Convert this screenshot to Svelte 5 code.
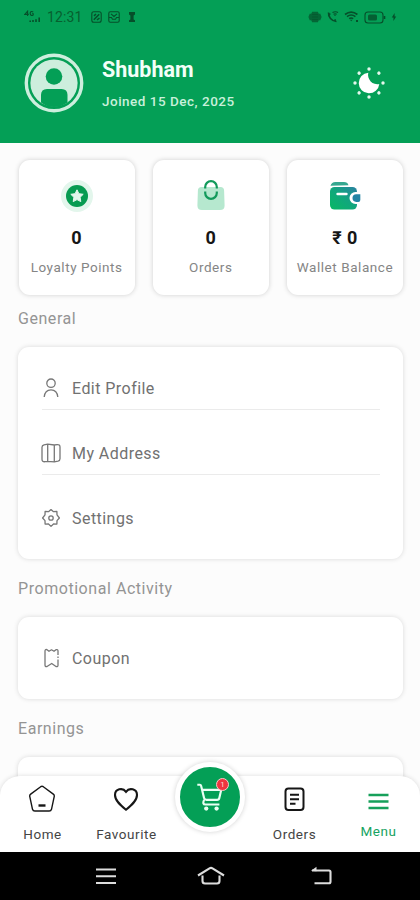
<script lang="ts">
  const stats = [
    { icon: "points", value: "0", label: "Loyalty Points" },
    { icon: "bag", value: "0", label: "Orders" },
    { icon: "wallet", value: "₹ 0", label: "Wallet Balance" },
  ];

  const sections = [
    {
      title: "General",
      items: [
        { icon: "profile", label: "Edit Profile" },
        { icon: "map", label: "My Address" },
        { icon: "settings", label: "Settings" },
      ],
    },
    { title: "Promotional Activity", items: [{ icon: "coupon", label: "Coupon" }] },
    { title: "Earnings", items: [{ icon: "", label: "" }] },
  ];

  const sunDots = [0, 45, 90, 135, 180, 225, 270, 315];
</script>

<div class="screen">
  <header>
    <div class="status">
      <svg class="signal" width="18" height="14" viewBox="0 0 18 14">
        <path d="M3.6 6V1.2L.8 4.4h4M9.2 2.1C7.4.6 6 2 6.2 3.6c.2 2 2.3 2.4 3 1.4V3.8H8" />
        <path class="thick" d="M6.2 12v-1.5M9 12v-2M12 12V9.2M15.2 12V7.6" />
      </svg>
      <span class="clock">12:31</span>
      <svg width="11" height="12" viewBox="0 0 11 12">
        <rect x=".8" y=".8" width="9.4" height="10.4" rx="2" />
        <path class="thick" d="M2.8 8.800l5.400-5.600M3 4.800l2-1.800M6 9l2.500-2" />
      </svg>
      <svg class="mail" width="12" height="12" viewBox="0 0 12 12">
        <rect x=".8" y=".8" width="10.4" height="10.4" rx="1.5" />
        <path d="M3 2.800l3 2.700 3-2.700M1 6.500h2.500l1 1.700h3l1-1.700H11" />
      </svg>
      <svg class="task" width="8" height="12" viewBox="0 0 8 12">
        <path class="solid" d="M1 1h6v2.500L5.600 4.500v4L7 9.200V11H1V9.200l1.400-.7v-4L1 3.500z" />
      </svg>
      <div class="status-right">
        <svg width="14" height="12" viewBox="0 0 14 12">
          <path class="solid" d="M4.200.8h5.600l1 2h1.500L13.600 6l-1.300 3.200h-1.500l-1 2H4.200l-1-2H1.700L.4 6l1.300-3.200h1.500z" opacity=".7" />
          <path d="M4 3.500h6M4 6h6M4 8.500h6" opacity=".5" />
        </svg>
        <svg width="12" height="12" viewBox="0 0 12 12">
          <path class="thick" d="M1.500 1.500c-.4 4.500 3 8.700 8 9M1.200 2.500l2.200 1M8 10.500l.2-2.200" />
          <path d="M5.500 1.500c2-1 4-1 5.500 0M6.500 3.300c1.200-.6 2-.6 3.200 0M8 5V4" />
        </svg>
        <svg width="15" height="12" viewBox="0 0 15 12">
          <path class="thick" d="M1 3.500c3.800-3 8.600-3 12.400 0M3 5.600c2.600-2 5.800-2 8.400 0M5.200 7.700c1.400-1 2.600-1 4 0" />
          <path class="solid" d="M6 8.800h2.400L7.200 10.300zM12 9h2v2h-2z" />
        </svg>
        <svg class="battery" width="22" height="13" viewBox="0 0 22 13">
          <rect x="1" y="1" width="18" height="11" rx="3" />
          <rect class="solid" x="4" y="3.5" width="9" height="6" rx="1.5" opacity=".8" />
          <path class="thick" d="M20.500 5v3" />
        </svg>
        <svg width="6" height="12" viewBox="0 0 6 12">
          <path class="solid" d="M3.600 2L.8 6.500h1.700L2.400 10l2.800-4.500H3.600z" />
        </svg>
      </div>
    </div>

    <div class="user">
      <svg class="avatar" width="60" height="60" viewBox="0 0 60 60">
        <circle cx="30" cy="30" r="27.7" fill="none" stroke="#cdeedd" stroke-width="3.4" />
        <circle cx="30" cy="30" r="23.6" fill="#cdeedd" />
        <circle cx="30" cy="23.5" r="8.3" fill="#049f56" />
        <path d="M17 49.500V42q0-6 6-6h14.500q6 0 6 6v7.500Q37 54 30 54t-13-4.500z" fill="#049f56" />
      </svg>
      <div class="info">
        <div class="name">Shubham</div>
        <div class="joined">Joined 15 Dec, 2025</div>
      </div>
      <svg class="theme" width="34" height="34" viewBox="0 0 34 34">
        <path d="M16.300 6.700A10.300 10.300 0 1 0 27.300 18 9.300 9.300 0 0 1 16.300 6.700z" fill="#fff" />
        {#each sunDots as angle}
          <circle cx="17" cy="3" r="1.7" fill="#e4f7ec" transform="rotate({angle} 17 17)" />
        {/each}
      </svg>
    </div>
  </header>

  <main>
    <div class="stats">
      {#each stats as stat}
        <div class="stat">
          {#if stat.icon === "points"}
            <svg width="34" height="34" viewBox="0 0 34 34">
              <circle cx="17" cy="17" r="16" fill="#e3f6ec" />
              <circle cx="17" cy="17" r="11" fill="#079b51" />
              <path d="M17 10.800l1.900 3.900 4.300.6-3.100 3 .7 4.300-3.800-2-3.800 2 .7-4.300-3.100-3 4.300-.6z" fill="#e3f6ec" stroke="#e3f6ec" stroke-linejoin="round" />
            </svg>
          {:else if stat.icon === "bag"}
            <svg width="34" height="34" viewBox="0 0 34 34">
              <path d="M7.500 8h19q3.500 0 3.600 3.500l.5 15q0 4.500-4.500 4.500H7.900q-4.500 0-4.500-4.500l.5-15Q4 8 7.500 8z" fill="#b6e8cf" />
              <path d="M11.200 9.500V8a5.800 5.800 0 0 1 11.600 0v1.500M11.200 12.500v1.500a5.800 5.800 0 0 0 11.600 0v-1.500" fill="none" stroke="#129a5b" stroke-width="2.2" />
            </svg>
          {:else}
            <svg width="34" height="34" viewBox="0 0 34 34">
              <defs>
                <linearGradient id="wallet" x1="0" y1="1" x2="1" y2="0">
                  <stop offset="0" stop-color="#08b864" />
                  <stop offset=".5" stop-color="#10a77c" />
                  <stop offset="1" stop-color="#2b80a2" />
                </linearGradient>
              </defs>
              <path d="M2.500 6.800Q3.500 3 7.500 3H16q3.500 0 4.500 3.200z" fill="#35a790" />
              <rect x="2" y="8" width="27" height="22.5" rx="4.5" fill="url(#wallet)" />
              <path d="M9.500 15h9" stroke="#fff" stroke-width="2.4" stroke-linecap="round" />
              <path d="M33 13h-5.500a6 6 0 0 0 0 12H33z" fill="#fff" />
              <path d="M32.300 15.300h-4a3.800 3.800 0 0 0 0 7.600h2q2 0 2-2z" fill="#2384a4" />
            </svg>
          {/if}
          <div class="value">{stat.value}</div>
          <div class="label">{stat.label}</div>
        </div>
      {/each}
    </div>

    {#each sections as section}
      <section>
        <h2>{section.title}</h2>
        <div class="card">
          {#each section.items as item}
            <div class="row">
              <svg class="row-icon" width="20" height="20" viewBox="0 0 20 20">
                {#if item.icon === "profile"}
                  <circle cx="10" cy="5.2" r="4.2" />
                  <path d="M3.200 19c.4-4.600 3-7.200 6.800-7.200s6.400 2.600 6.800 7.200" />
                {:else if item.icon === "map"}
                  <path d="M6.700 18.400L4 18.700q-3 .3-3-2.400V4.300q0-2 2-2.500l3.700-.6 6.600.8 2.700-.4q3-.3 3 2.400v11.800q0 2-2 2.400l-3.700.6zM6.700 1.200v17.200M13.300 2v16.800" />
                {:else if item.icon === "settings"}
                  <path d="M10 1.600l2.500 2.100 3.400-.2.100 3.300L18.400 10 16 12.600l-.1 3.500-3.400-.1L10 18.400 7.500 16l-3.400.1-.1-3.500L1.600 10 4 6.800l.1-3.300 3.400.2z" />
                  <circle cx="10" cy="10" r="2.2" />
                {:else if item.icon === "coupon"}
                  <path d="M4 17V3q0-2 2-1.300l2 1.600 2.500-1.500L13 3.300l2-1.600q2-.5 2 1.300v14.200q0 1.800-2 1.300l-4.300-3-4.700 3q-2 .5-2-1.500z" />
                  <path class="notch" d="M17 7v6" />
                {/if}
              </svg>
              <span>{item.label}</span>
            </div>
          {/each}
        </div>
      </section>
    {/each}
  </main>

  <div class="bottom">
    <nav>
      <div class="tab">
        <svg width="28" height="28" viewBox="0 0 28 28">
          <path d="M12.700 1.700q1.300-.9 2.600 0l10 7.400q1.300 1 .9 2.500l-2.700 12.700q-.5 1.700-2.300 1.700H6.800q-1.800 0-2.300-1.700L1.800 11.600q-.4-1.500.9-2.500z" stroke-width="1.4" />
          <path d="M10.500 20.500h7" stroke-width="2.4" />
        </svg>
        <span>Home</span>
      </div>
      <div class="tab">
        <svg width="28" height="28" viewBox="0 0 28 28">
          <path d="M14 24.700C8.500 20.300 3 15.700 3 10 3 3.900 10.600 2.100 14 6.800c3.400-4.700 11-2.900 11 3.200 0 5.700-5.500 10.300-11 14.700z" stroke-width="2.1" />
        </svg>
        <span>Favourite</span>
      </div>
      <div class="tab"></div>
      <div class="tab">
        <svg width="28" height="28" viewBox="0 0 28 28">
          <rect x="5.5" y="3.5" width="18" height="21.5" rx="3" stroke-width="2" />
          <path d="M10 9.700h9M10 14.200h9M10 18.700h5.500" stroke-width="2" />
        </svg>
        <span>Orders</span>
      </div>
      <div class="tab active">
        <svg width="28" height="28" viewBox="0 0 28 28">
          <path d="M4.500 10h20M4.500 16.500h20M4.500 23h20" stroke-width="2.3" />
        </svg>
        <span>Menu</span>
      </div>
    </nav>
    <div class="cart">
      <svg width="32" height="32" viewBox="0 0 34 34">
        <path d="M3.500 4h2.800q1 0 1.300 1.200L10.700 18q.5 2 2.500 2H24.500q2 0 2.400-2l2-8.500H8.600M10.700 20q-2.200 5 1.500 5H27" />
        <circle cx="13" cy="29.3" r="2.3" />
        <circle cx="24" cy="29.3" r="2.3" />
      </svg>
      <span class="badge">1</span>
    </div>
  </div>

  <footer>
    <svg width="22" height="20" viewBox="0 0 22 20">
      <path d="M1 3.500h20M1 10.300h20M1 17h20" />
    </svg>
    <svg width="28" height="20" viewBox="0 0 28 20">
      <path d="M1 9.500L12.500 2.300q1.500-.9 3 0L27 9.500M5.500 9.500V15q0 2.500 2.500 2.500h12q2.500 0 2.500-2.500V9.500" />
    </svg>
    <svg class="back" width="22" height="20" viewBox="0 0 22 20">
      <path d="M2 4.500h17q1.500 0 1.500 1.500v9.800q0 1.500-1.500 1.500H4.500" />
      <path d="M1 4.800L6.500.8v4.500z" fill="#ddd" stroke="none" />
    </svg>
  </footer>
</div>

<style>
  :global(body) {
    background: #fcfcfc;
  }

  .screen {
    position: relative;
    width: 420px;
    height: 900px;
    overflow: hidden;
    background: #fcfcfc;
    font-family: Roboto, "Noto Sans", sans-serif;
  }

  header {
    height: 142.5px;
    background: #049f56;
  }

  .status {
    display: flex;
    align-items: center;
    height: 34px;
    padding: 0 23px 0 24px;
    color: #07602f;
  }

  .status svg {
    fill: none;
    stroke: #064f2a;
    stroke-width: 1.1;
  }

  .status .thick {
    stroke-width: 1.6;
  }

  .status .solid {
    fill: #064f2a;
    stroke: none;
  }

  .clock {
    width: 36px;
    margin: 0 8px 0 5px;
    font-size: 14px;
    letter-spacing: 0.15px;
  }

  .status .mail {
    margin-left: 6px;
  }

  .status .task {
    margin-left: 8px;
  }

  .status-right {
    display: flex;
    align-items: center;
    gap: 5px;
    margin-left: auto;
  }

  .user {
    display: flex;
    align-items: center;
    height: 98px;
    padding: 0 34px 0 24px;
  }

  .info {
    flex: 1;
    margin-left: 18px;
    padding-top: 2px;
  }

  .name {
    font-size: 21.5px;
    line-height: 24px;
    font-weight: 700;
    color: #f3fff8;
  }

  .joined {
    margin-top: 10px;
    font-size: 13.5px;
    line-height: 18px;
    font-weight: 500;
    letter-spacing: 0.5px;
    color: #c9f0db;
  }

  .stats {
    display: flex;
    gap: 18px;
    padding: 17px 17px 0 18.5px;
  }

  .stat {
    flex: 1;
    display: flex;
    flex-direction: column;
    align-items: center;
    height: 135px;
    box-sizing: border-box;
    padding-top: 19px;
    border-radius: 11px;
    background: #fff;
    box-shadow: 0 0 5px rgba(0, 0, 0, 0.18);
    white-space: nowrap;
  }

  .value {
    margin-top: 14px;
    font-size: 18px;
    line-height: 22px;
    font-weight: 700;
    letter-spacing: 0.3px;
    color: #161616;
  }

  .label {
    margin-top: 9px;
    font-size: 13.5px;
    line-height: 18px;
    letter-spacing: 0.55px;
    color: #858585;
  }

  section {
    padding-top: 19px;
  }

  .stats + section {
    padding-top: 13.5px;
  }

  h2 {
    margin: 0 0 17px 18px;
    font-size: 16px;
    line-height: 22px;
    font-weight: 400;
    letter-spacing: 0.55px;
    color: #949494;
  }

  .card {
    margin: 0 17px 0 18px;
    padding: 20px 23px 20px 24px;
    border-radius: 11px;
    background: #fff;
    box-shadow: 0 0 5px rgba(0, 0, 0, 0.14);
  }

  .row {
    display: flex;
    align-items: center;
    height: 42px;
    font-size: 16px;
    letter-spacing: 0.45px;
    color: #717171;
  }

  .row + .row {
    padding-top: 22px;
    border-top: 1px solid #ebebeb;
  }

  .row-icon {
    margin: 0 11px 0 -1px;
    fill: none;
    stroke: #777;
    stroke-width: 1.3;
    stroke-linejoin: round;
  }

  .row-icon .notch {
    stroke: #fff;
    stroke-width: 2;
    stroke-dasharray: 1.5 1.5;
  }

  /* The tab bar floats over the scrolling content */
  .bottom {
    position: absolute;
    left: 0;
    bottom: 48px;
    width: 100%;
  }

  nav {
    display: flex;
    height: 76px;
    border-radius: 20px 20px 0 0;
    background: #fff;
    box-shadow: 0 0 5px rgba(0, 0, 0, 0.14);
  }

  .tab {
    width: 84px;
    display: flex;
    flex-direction: column;
    align-items: center;
    padding-top: 9px;
    font-size: 13.5px;
    letter-spacing: 0.55px;
    color: #444;
  }

  .tab svg {
    fill: none;
    stroke: #161616;
  }

  .tab span {
    margin-top: 12px;
    padding-left: 1px;
    line-height: 18px;
  }

  .tab.active {
    color: #16a362;
  }

  .tab.active svg {
    stroke: #16a05a;
  }

  .tab.active span {
    margin-top: 9px;
  }

  .cart {
    position: absolute;
    left: 175px;
    top: -14px;
    width: 70px;
    height: 70px;
    box-sizing: border-box;
    display: flex;
    align-items: center;
    justify-content: center;
    border: 5.5px solid #fff;
    border-radius: 50%;
    background: #049f56;
    box-shadow: 0 0 5px rgba(0, 0, 0, 0.18);
  }

  .cart svg {
    fill: none;
    stroke: #e9fff3;
    stroke-width: 2.3;
  }

  .cart circle {
    fill: #e9fff3;
    stroke: none;
  }

  .badge {
    position: absolute;
    left: 36px;
    top: 11px;
    width: 11px;
    height: 11px;
    border: 1px solid #f7c9c9;
    border-radius: 50%;
    background: #ee3540;
    color: #ffd9d9;
    font-size: 8px;
    line-height: 11px;
    text-align: center;
  }

  footer {
    position: absolute;
    left: 0;
    bottom: 0;
    width: 100%;
    height: 48px;
    display: flex;
    align-items: center;
    gap: 80px;
    box-sizing: border-box;
    padding-left: 95px;
    background: #000;
  }

  footer svg {
    fill: none;
    stroke: #ddd;
    stroke-width: 2.1;
  }

  footer .back {
    margin-left: 5px;
  }
</style>
